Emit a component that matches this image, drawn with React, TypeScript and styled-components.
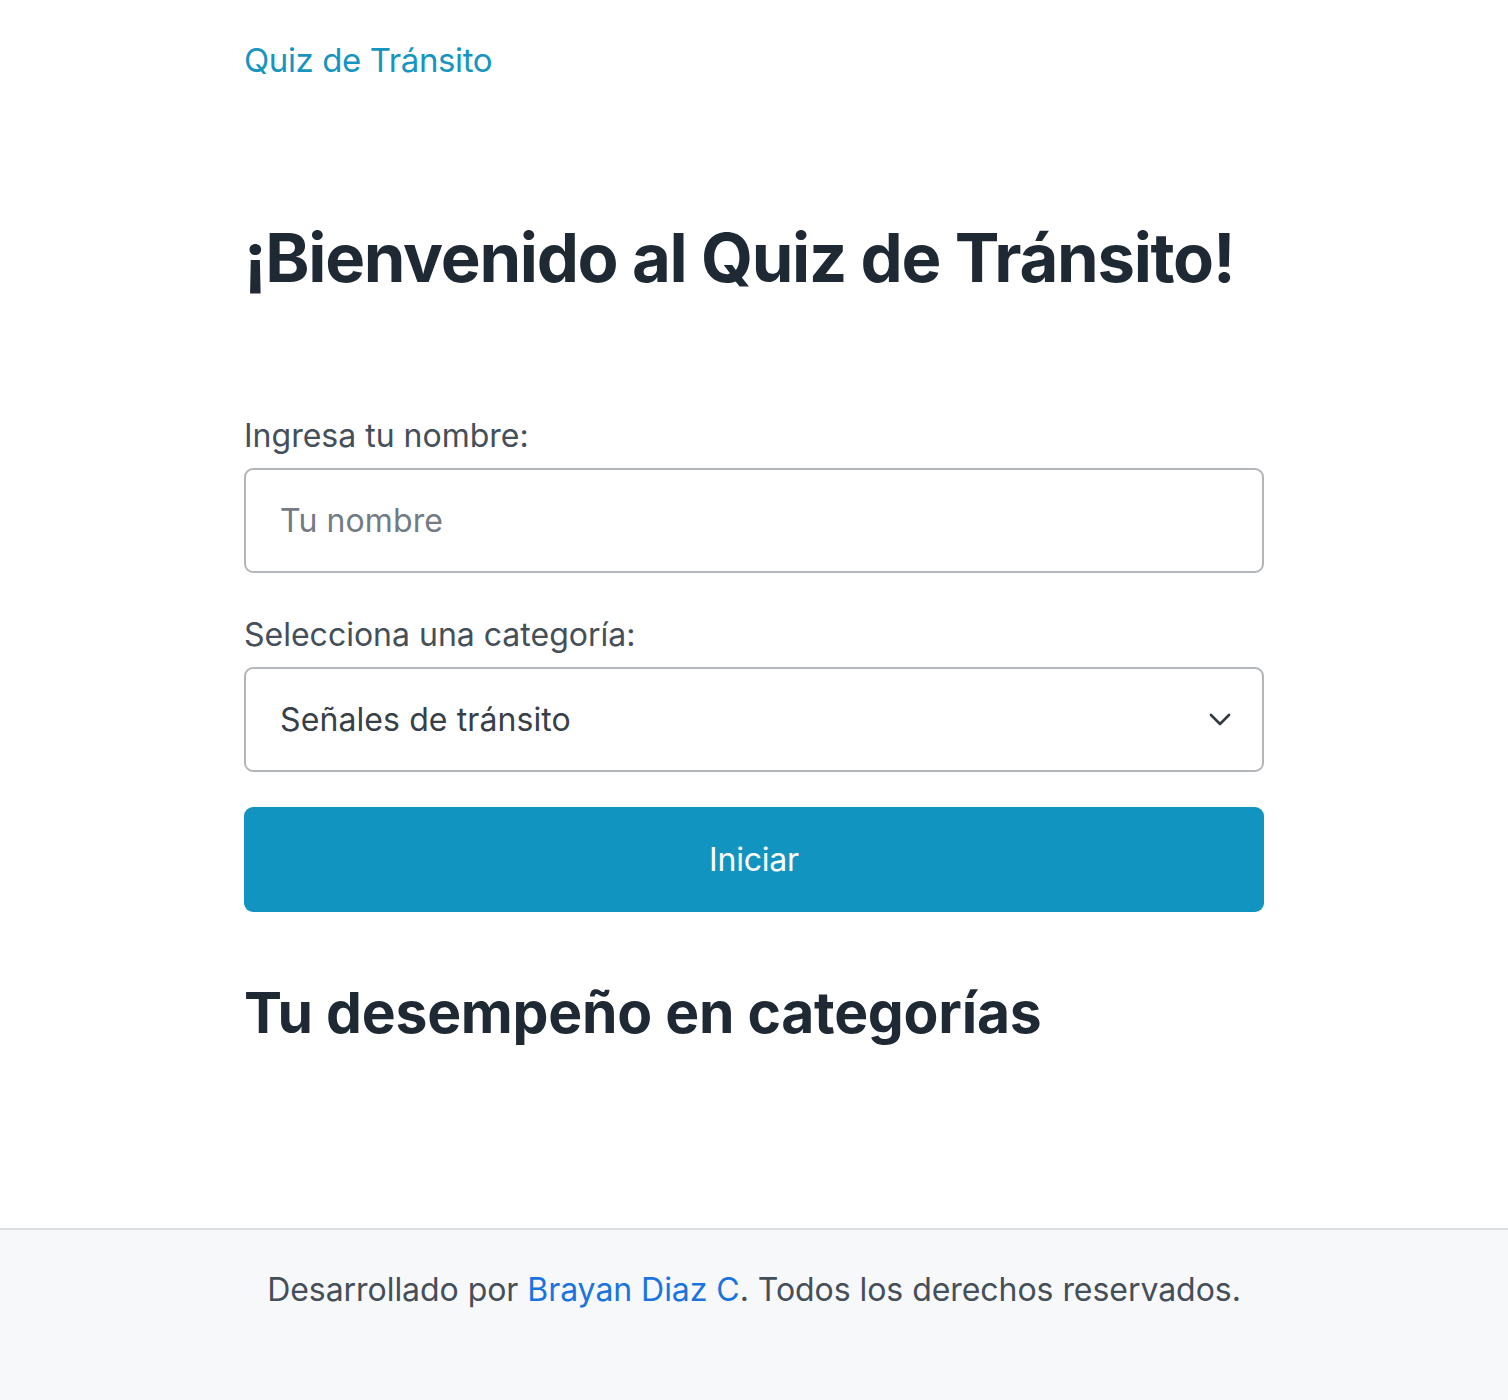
import React from "react";
import styled, { createGlobalStyle } from "styled-components";

const Global = createGlobalStyle`
  html, body { margin: 0; padding: 0; background: #ffffff; }
  body { font-family: Inter, "Noto Sans", "Liberation Sans", sans-serif; color: #212529; }
  * { box-sizing: border-box; }
`;

const Page = styled.div`
  min-height: 100vh;
  display: flex;
  flex-direction: column;
`;

const Container = styled.div`
  width: 1020px;
  margin: 0 auto;
`;

const NavBar = styled.nav`
  padding-top: 36px;
`;

const Brand = styled.a`
  display: inline-block;
  font-size: 33px;
  line-height: 48px;
  color: #1795c0;
  text-decoration: none;
  letter-spacing: -0.4px;
`;

const Main = styled.main`
  flex: 1;
`;

const Title = styled.h1`
  margin: 134px 0 0;
  font-size: 67px;
  line-height: 80px;
  font-weight: 700;
  color: #1f2933;
  letter-spacing: -1.3px;
  white-space: nowrap;
`;

const Form = styled.form`
  margin-top: 114px;
  display: flex;
  flex-direction: column;
`;

const Label = styled.label`
  display: block;
  font-size: 32px;
  line-height: 48px;
  color: #454f59;
  margin-bottom: 8px;
  letter-spacing: 0px;
`;

const fieldBase = `
  width: 100%;
  height: 105px;
  border: 2px solid #b2b6ba;
  border-radius: 9px;
  padding: 0 34px;
  font-family: Inter, "Noto Sans", "Liberation Sans", sans-serif;
  font-size: 32px;
  background: #ffffff;
  letter-spacing: 0.1px;
`;

const TextInput = styled.input`
  ${fieldBase}
  color: #212529;
  margin-bottom: 38px;
  &::placeholder { color: #737b84; }
  outline: none;
`;

const SelectWrap = styled.div`
  position: relative;
  margin-bottom: 35px;
`;

const Select = styled.select`
  ${fieldBase}
  appearance: none;
  -webkit-appearance: none;
  color: #373f48;
  outline: none;
`;

const Chevron = styled.svg`
  position: absolute;
  right: 33px;
  top: 50%;
  transform: translateY(-50%);
  pointer-events: none;
`;

const Button = styled.button`
  width: 100%;
  height: 105px;
  border: none;
  border-radius: 9px;
  background: #1294c0;
  color: #ffffff;
  font-family: Inter, "Noto Sans", "Liberation Sans", sans-serif;
  font-size: 32px;
  letter-spacing: -0.2px;
  cursor: pointer;
`;

const SubTitle = styled.h2`
  margin: 65px 0 0;
  font-size: 57px;
  line-height: 72px;
  font-weight: 700;
  color: #1f2933;
  letter-spacing: -0.25px;
`;

const Footer = styled.footer`
  height: 172px;
  border-top: 2px solid #dcdee0;
  background: #f7f8fa;
  padding-top: 36px;
  text-align: center;
  font-size: 32px;
  line-height: 48px;
  color: #454f59;
  letter-spacing: -0.05px;
`;

const FooterLink = styled.a`
  color: #1a74e0;
  text-decoration: none;
`;

export default function App() {
  return (
    <Page>
      <Global />
      <NavBar>
        <Container>
          <Brand href="#">Quiz de Tránsito</Brand>
        </Container>
      </NavBar>
      <Main>
        <Container>
          <Title>¡Bienvenido al Quiz de Tránsito!</Title>
          <Form onSubmit={(e) => e.preventDefault()}>
            <Label htmlFor="nombre">Ingresa tu nombre:</Label>
            <TextInput id="nombre" type="text" placeholder="Tu nombre" />
            <Label htmlFor="categoria">Selecciona una categoría:</Label>
            <SelectWrap>
              <Select id="categoria" defaultValue="senales">
                <option value="senales">Señales de tránsito</option>
                <option value="normas">Normas de tránsito</option>
              </Select>
              <Chevron width="22" height="14" viewBox="0 0 22 14" fill="none">
                <path d="M2 2 L11 11 L20 2" stroke="#343a40" strokeWidth="2.6" strokeLinecap="round" strokeLinejoin="round" />
              </Chevron>
            </SelectWrap>
            <Button type="submit">Iniciar</Button>
          </Form>
          <SubTitle>Tu desempeño en categorías</SubTitle>
        </Container>
      </Main>
      <Footer>
        Desarrollado por <FooterLink href="#">Brayan Diaz C</FooterLink>. Todos los derechos reservados.
      </Footer>
    </Page>
  );
}
